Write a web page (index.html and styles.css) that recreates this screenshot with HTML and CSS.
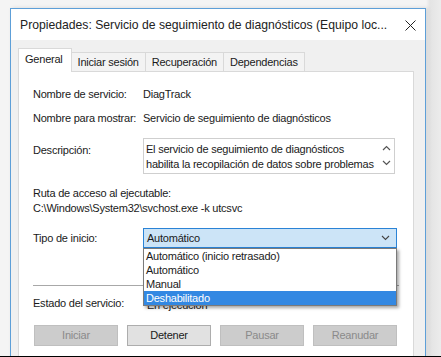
FILE: index.html
```html
<!DOCTYPE html>
<html lang="es">
<head>
<meta charset="utf-8">
<link rel="stylesheet" href="styles.css">
</head>
<body>
<div class="screen">
  <div class="window">
    <div class="titlebar">
      <span class="title">Propiedades: Servicio de seguimiento de diagnósticos (Equipo loc...</span>
      <svg class="close" width="11" height="11" viewBox="0 0 11 11"><path d="M0.5 0.5 L10.5 10.5 M10.5 0.5 L0.5 10.5" stroke="#222" stroke-width="1" fill="none"/></svg>
    </div>
    <div class="body">
      <div class="tabs">
        <div class="tab active">General</div>
        <div class="tab">Iniciar sesión</div>
        <div class="tab">Recuperación</div>
        <div class="tab">Dependencias</div>
      </div>
      <div class="panel">
        <div class="row">
          <div class="label">Nombre de servicio:</div>
          <div class="value">DiagTrack</div>
        </div>
        <div class="row">
          <div class="label">Nombre para mostrar:</div>
          <div class="value">Servicio de seguimiento de diagnósticos</div>
        </div>
        <div class="row desc-row">
          <div class="label desc-label">Descripción:</div>
          <div class="textbox">
            <div class="textbox-text">El servicio de seguimiento de diagnósticos<br>habilita la recopilación de datos sobre problemas</div>
            <div class="scroll">
              <svg width="9" height="6" viewBox="0 0 9 6"><path d="M1 5 L4.5 1.5 L8 5" stroke="#555" stroke-width="1.2" fill="none"/></svg>
              <svg width="9" height="6" viewBox="0 0 9 6"><path d="M1 1 L4.5 4.5 L8 1" stroke="#555" stroke-width="1.2" fill="none"/></svg>
            </div>
          </div>
        </div>
        <div class="path-block">
          <div class="line">Ruta de acceso al ejecutable:</div>
          <div class="line">C:\Windows\System32\svchost.exe -k utcsvc</div>
        </div>
        <div class="row start-row">
          <div class="label">Tipo de inicio:</div>
          <div class="combo">
            <div class="select">
              <span>Automático</span>
              <svg width="9" height="6" viewBox="0 0 9 6"><path d="M1 1 L4.5 4.5 L8 1" stroke="#444" stroke-width="1.1" fill="none"/></svg>
            </div>
            <div class="dropdown">
              <div class="item">Automático (inicio retrasado)</div>
              <div class="item">Automático</div>
              <div class="item">Manual</div>
              <div class="item selected">Deshabilitado</div>
            </div>
          </div>
        </div>
        <div class="separator"></div>
        <div class="row status-row">
          <div class="label">Estado del servicio:</div>
          <div class="value status">En ejecución</div>
        </div>
        <div class="buttons">
          <div class="btn disabled">Iniciar</div>
          <div class="btn">Detener</div>
          <div class="btn disabled">Pausar</div>
          <div class="btn disabled">Reanudar</div>
        </div>
      </div>
    </div>
  </div>
</div>
</body>
</html>
```

FILE: styles.css
```css
* { box-sizing: border-box; }
html, body { margin: 0; padding: 0; }
body {
  font-family: "Liberation Sans", Arial, sans-serif;
  font-size: 11px;
  letter-spacing: -0.22px;
  color: #1a1a1a;
  background: #f4f4f4;
}
.screen {
  width: 441px;
  height: 357px;
  overflow: hidden;
  border-bottom: 1px solid #000;
  background: linear-gradient(to right, #f4f4f4 0, #f4f4f4 426px, #e4e4e4 430px, #ececec 441px);
  padding: 8px 0 0 10px;
}
.window {
  width: 416px;
  height: 400px;
  border: 1px solid #5d9fd8;
  background: #f0f0f0;
  box-shadow: 2px 0 4px rgba(0,0,0,0.12);
}
.titlebar {
  height: 31px;
  background: #fff;
  display: flex;
  align-items: center;
  padding: 1px 0 0 9px;
}
.title {
  font-size: 12.2px;
  letter-spacing: 0;
  color: #222;
  flex: 1;
  white-space: nowrap;
  overflow: hidden;
}
.close { margin: 0 9px 0 8px; flex: none; }
.body {
  padding: 8px 0 0 7px;
}
.tabs {
  display: flex;
  align-items: flex-end;
  height: 23px;
  position: relative;
  z-index: 1;
}
.tab {
  height: 19px;
  line-height: 18px;
  padding: 0 6px;
  border: 1px solid #d9d9d9;
  border-bottom: none;
  border-left: none;
  background: #f3f3f3;
  color: #1a1a1a;
}
.tab.active {
  line-height: 21px;
  border-left: 1px solid #d9d9d9;
  background: #fff;
  padding: 0 8px 0 6px;
  margin-bottom: -1px;
  height: 24px;
}
.panel {
  width: 396px;
  height: 300px;
  background: #fff;
  border: 1px solid #d9d9d9;
  padding: 10px 0 0 14px;
}
.row {
  display: flex;
  align-items: center;
  height: 24px;
}
.label { width: 110px; flex: none; white-space: nowrap; }
.value { white-space: nowrap; }
.desc-row {
  align-items: flex-start;
  height: auto;
  margin-top: 8px;
}
.desc-label { padding-top: 6px; }
.textbox {
  width: 252px;
  height: 36px;
  border: 1px solid #cfcfcf;
  display: flex;
  padding: 3px 0 0 2px;
}
.textbox-text {
  flex: 1;
  line-height: 15px;
  white-space: nowrap;
}
.scroll {
  width: 16px;
  display: flex;
  flex-direction: column;
  align-items: center;
  gap: 9px;
  padding-top: 3px;
}
.path-block {
  margin-top: 12px;
  line-height: 15px;
}
.start-row {
  height: 20px;
  margin-top: 12px;
}
.combo {
  position: relative;
  width: 254px;
}
.select {
  height: 20px;
  background: #cce4f7;
  border: 1px solid #2a83d6;
  display: flex;
  align-items: center;
  justify-content: space-between;
  padding: 0 6px 0 3px;
}
.dropdown {
  position: absolute;
  top: 20px;
  left: 0;
  width: 254px;
  background: #fff;
  border: 1px solid #7a7a7a;
  box-shadow: 2px 2px 3px rgba(0,0,0,0.35);
  z-index: 5;
}
.item {
  height: 14px;
  line-height: 14px;
  padding-left: 2px;
  white-space: nowrap;
}
.item.selected {
  background: #3388e2;
  color: #fff;
}
.separator {
  height: 1px;
  background: #a8a8a8;
  width: 366px;
  margin-top: 37px;
}
.status-row {
  height: 18px;
  margin-top: 8px;
}
.status { padding: 4px 0 0 4px; }
.buttons {
  display: grid;
  grid-template-columns: repeat(4, 84px);
  column-gap: 9px;
  margin: 13px 0 0 1px;
}
.btn {
  height: 21px;
  line-height: 19px;
  text-align: center;
  background: #e1e1e1;
  border: 1px solid #adadad;
}
.btn.disabled {
  background: #cccccc;
  border-color: #bfbfbf;
  color: #8a8a8a;
}
```
